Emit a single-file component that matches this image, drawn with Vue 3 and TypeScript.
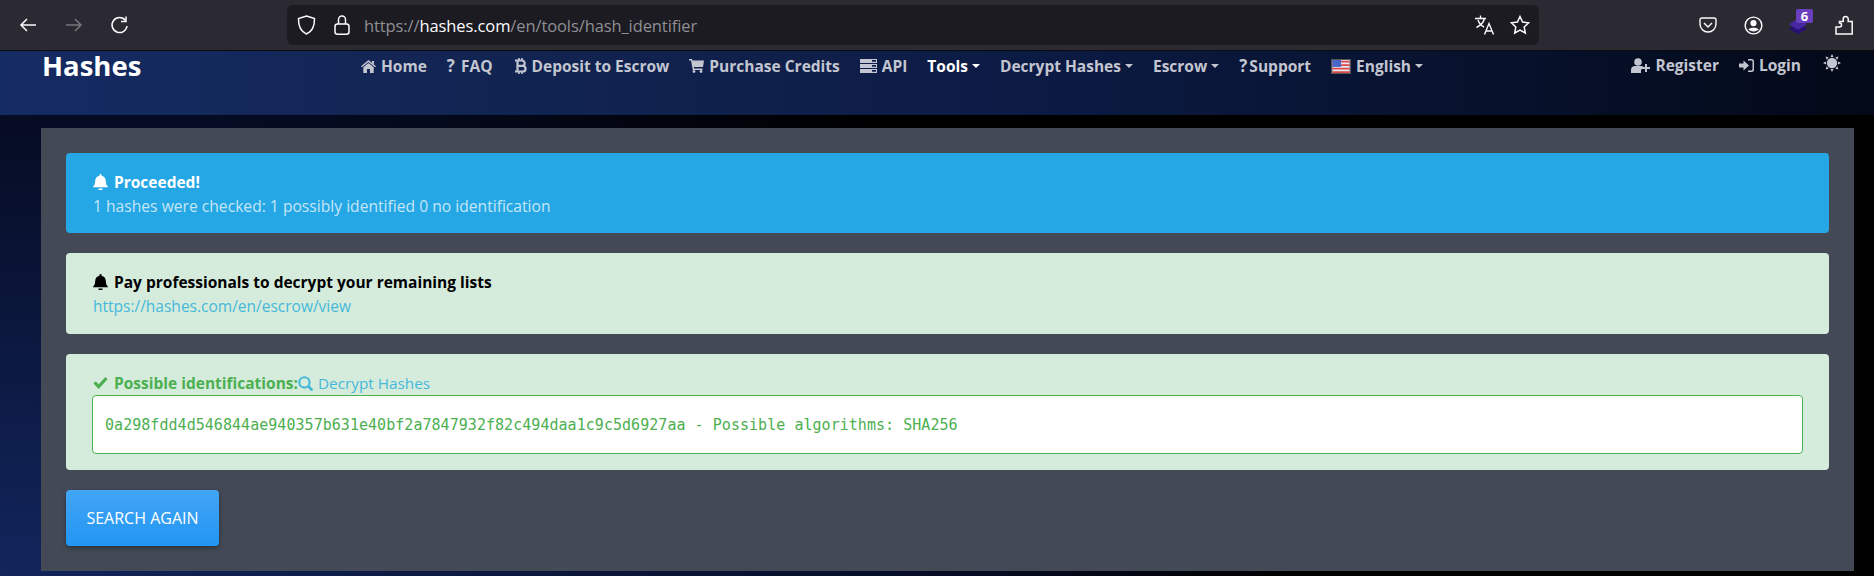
<script setup lang="ts">
const navLeft = [
  { label: 'Home', icon: 'home' },
  { label: 'FAQ', icon: 'q' },
  { label: 'Deposit to Escrow', icon: 'btc' },
  { label: 'Purchase Credits', icon: 'cart' },
  { label: 'API', icon: 'server' },
]
const navDrop = [
  { label: 'Tools', active: true },
  { label: 'Decrypt Hashes', active: false },
  { label: 'Escrow', active: false },
]
const hash = '0a298fdd4d546844ae940357b631e40bf2a7847932f82c494daa1c9c5d6927aa - Possible algorithms: SHA256'
</script>

<template>
  <div class="page">
    <div class="chrome">
      <div class="chrome-nav">
        <svg width="20" height="20" viewBox="0 0 20 20" fill="none" stroke="#fbfbfe" stroke-width="1.5"><path d="M18 10H3M9 4l-6 6 6 6" /></svg>
        <svg width="20" height="20" viewBox="0 0 20 20" fill="none" stroke="#76767c" stroke-width="1.5"><path d="M2 10h15M11 4l6 6-6 6" /></svg>
        <svg width="20" height="20" viewBox="0 0 20 20" fill="none" stroke="#fbfbfe" stroke-width="1.5"><path d="M15.5 5.5A7.5 7.5 0 1 0 17 11" /><path d="M16 1.5v5h-5" /></svg>
      </div>
      <div class="urlbar">
        <svg class="shield" width="19" height="20" viewBox="0 0 19 20" fill="none" stroke="#fbfbfe" stroke-width="1.5"><path d="M9.500 1l8 2.500c.2 7-1.500 12.500-8 15.500-6.500-3-8.200-8.500-8-15.500z" /></svg>
        <svg class="lock" width="16" height="20" viewBox="0 0 16 20" fill="none" stroke="#fbfbfe" stroke-width="1.5"><rect x="1" y="9" width="14" height="10.200" rx="2.500" /><path d="M4.500 9V4.500a3.500 3.500 0 0 1 7 0V9" /></svg>
        <div class="url"><span>https://</span><b>hashes.com</b><span>/en/tools/hash_identifier</span></div>
        <svg class="translate" width="20" height="20" viewBox="0 0 20 20" fill="none" stroke="#fbfbfe" stroke-width="1.400"><path d="M0 3.500h11M5.500 0.500v3M9.500 3.500c-1 4-4 7-8 9M3 5c1 3 3 5.500 6 7" /><path d="M9.500 19.500l4.500-11 4.500 11M11 16h6" /></svg>
        <svg class="star" width="20" height="20" viewBox="0 0 20 20" fill="none" stroke="#fbfbfe" stroke-width="1.500"><path d="M10 1.500l2.600 5.500 6 .8-4.400 4.200 1.100 6L10 15.100 4.700 18l1.100-6L1.400 7.800l6-.8z" /></svg>
      </div>
      <div class="chrome-tools">
        <svg width="18" height="17" viewBox="0 0 18 17" fill="none" stroke="#fbfbfe" stroke-width="1.400"><path d="M1 3a2 2 0 0 1 2-2h12a2 2 0 0 1 2 2v4a8 8 0 0 1-16 0z" /><path d="M5 6l4 4 4-4" /></svg>
        <svg width="19" height="19" viewBox="0 0 20 20" fill="none" stroke="#fbfbfe" stroke-width="1.500"><circle cx="10" cy="10" r="8.800" /><circle cx="10" cy="7.500" r="3.200" fill="#fbfbfe" stroke="none" /><path d="M4.500 14c2-2.200 9-2.200 11 0-2.500 3-8.500 3-11 0z" fill="#fbfbfe" stroke="none" /></svg>
        <div class="ext">
          <svg width="20" height="20" viewBox="0 0 22 20"><path d="M11 6l10 6-10 6-10-6z" fill="#271274" /><path d="M11 1l10 6-10 6-10-6z" fill="#4528a0" /></svg>
          <span class="ext-badge">6</span>
        </div>
        <svg width="18" height="20" viewBox="0 0 18 20" fill="none" stroke="#fbfbfe" stroke-width="1.500"><path d="M1 12h3.500a2 2 0 0 0 0-4V6.500h3.700V4a2.500 2.500 0 0 1 5 0v2.500h4V19H1z" /></svg>
      </div>
    </div>

    <header class="site-header">
      <div class="brand">Hashes</div>
      <nav class="nav">
        <a v-for="item in navLeft" :key="item.label" class="nav-link">
          <svg v-if="item.icon === 'home'" width="15" height="13" viewBox="0 0 15 13" fill="currentColor"><path d="M7.500 0l7.500 6.300-.9 1L7.500 1.900.9 7.300l-.9-1z" /><path d="M2.300 7.300l5.200-4.300 5.200 4.300V13H9V9H6v4H2.300z" /><path d="M11 1h2v3.500l-2-1.700z" /></svg>
          <span v-else-if="item.icon === 'q'" class="glyph q">?</span>
          <svg v-else-if="item.icon === 'btc'" class="btc" width="13" height="16" viewBox="0 0 13 16" fill="none" stroke="currentColor" stroke-width="2.200"><path d="M1 2.500h7a2.600 2.600 0 0 1 0 5.300H3.500h5.200a2.850 2.850 0 0 1 0 5.700H1M3.500 2.500v11" /><path d="M5 0v2.500M8 0v2.500M5 13.500V16M8 13.500V16" stroke-width="1.600" /></svg>
          <svg v-else-if="item.icon === 'cart'" width="15" height="14" viewBox="0 0 15 14" fill="currentColor"><path d="M0 0h3l.5 1.500H15l-1 6.500H4.800l.3 1.500h8.400V11H3.800L2 1.500H0z" /><circle cx="5" cy="12.500" r="1.400" /><circle cx="12" cy="12.500" r="1.400" /></svg>
          <svg v-else width="17" height="14" viewBox="0 0 17 14" fill="currentColor"><path d="M0 0h17v3.900H0zM0 5h17v3.900H0zM0 10h17v3.900H0z" /><path d="M12 1h4v1.700h-4zM12 6h4v1.700h-4zM12 11h4v1.700h-4z" fill="#0f1f50" /></svg>
          {{ item.label }}
        </a>
        <a v-for="item in navDrop" :key="item.label" class="nav-link" :class="{ active: item.active }">
          {{ item.label }}<i class="caret"></i>
        </a>
        <a class="nav-link support"><span class="glyph q">?</span>Support</a>
        <a class="nav-link">
          <svg width="20" height="15" viewBox="0 0 20 15" class="flag">
            <rect width="20" height="15" fill="#e8e8ee" />
            <path d="M0 1h20v2H0zM0 5h20v2H0zM0 9h20v2H0zM0 13h20v2H0z" fill="#d9484a" />
            <rect width="10" height="8" fill="#4867c8" />
          </svg>
          English<i class="caret"></i>
        </a>
      </nav>
      <div class="nav-right">
        <a class="nav-link">
          <svg width="19" height="15" viewBox="0 0 19 15" fill="currentColor"><circle cx="7" cy="4" r="3.800" /><path d="M0 15v-3c0-3 2-4 4-4h6c1.500 0 2.500.5 3 1.500h-2v2h-1V15z" /><path d="M14 6h2v3h3v2h-3v3h-2v-3h-3V9h3z" /></svg>
          Register
        </a>
        <a class="nav-link">
          <svg width="15" height="13" viewBox="0 0 15 13" fill="currentColor"><path d="M0 4.500h4.500V1.500L10 6.500l-5.500 5v-3H0z" /><path d="M9 0h3.500A2.500 2.500 0 0 1 15 2.500v8a2.500 2.500 0 0 1-2.500 2.500H9v-1.500h3.300c.7 0 1.200-.5 1.200-1.200V2.700c0-.7-.5-1.200-1.200-1.200H9z" /></svg>
          Login
        </a>
        <svg class="sun" width="18" height="18" viewBox="0 0 18 18" fill="currentColor"><circle cx="9" cy="9" r="5.200" /><path d="M9 0l1.500 3h-3zM9 18l-1.500-3h3zM0 9l3-1.500v3zM18 9l-3 1.500v-3zM2.600 2.600l3.200 1-2.200 2.200zM15.400 15.400l-3.200-1 2.200-2.200zM15.400 2.600l-1 3.200-2.200-2.200zM2.600 15.400l1-3.200 2.200 2.200z" /></svg>
      </div>
    </header>

    <main class="body-wrap">
      <section class="panel">
        <div class="alert alert-info">
          <div class="alert-title">
            <svg class="bell" width="15" height="16" viewBox="0 0 14 15" fill="currentColor"><path d="M7 0a1 1 0 0 1 1 1v.6c2.500.4 4 2.400 4 5 0 3 1 4.400 2 5.400v.5H0V12c1-1 2-2.400 2-5.400 0-2.600 1.500-4.600 4-5V1a1 1 0 0 1 1-1z" /><path d="M5 13.500h4a2 2 0 0 1-4 0z" /></svg>
            Proceeded!
          </div>
          <div class="alert-sub">1 hashes were checked: 1 possibly identified 0 no identification</div>
        </div>

        <div class="alert alert-success">
          <div class="alert-title dark">
            <svg class="bell" width="15" height="16" viewBox="0 0 14 15" fill="currentColor"><path d="M7 0a1 1 0 0 1 1 1v.6c2.500.4 4 2.400 4 5 0 3 1 4.400 2 5.400v.5H0V12c1-1 2-2.400 2-5.400 0-2.600 1.500-4.600 4-5V1a1 1 0 0 1 1-1z" /><path d="M5 13.500h4a2 2 0 0 1-4 0z" /></svg>
            Pay professionals to decrypt your remaining lists
          </div>
          <a class="link">https://hashes.com/en/escrow/view</a>
        </div>

        <div class="alert alert-result">
          <div class="result-head">
            <svg class="check" width="15" height="12" viewBox="0 0 14 12" fill="currentColor"><path d="M0 6.500l2.200-2.200 3 3L11.800 0 14 2.200 5.200 12z" /></svg>
            <b>Possible identifications:</b>
            <a class="link decrypt">
              <svg width="15" height="15" viewBox="0 0 14 14" fill="none" stroke="currentColor" stroke-width="2"><circle cx="6" cy="6" r="4.800" /><path d="M9.500 9.500L13.500 13.500" stroke-width="2.600" /></svg>
              Decrypt Hashes
            </a>
          </div>
          <div class="result-box">{{ hash }}</div>
        </div>

        <button class="search-btn">SEARCH AGAIN</button>
      </section>
    </main>
  </div>
</template>

<style scoped>
.page {
  width: 1874px;
  height: 576px;
  overflow: hidden;
  font-family: "Open Sans", "Noto Sans", sans-serif;
  background: #000;
}

.chrome {
  height: 50px;
  background: #2b2a33;
  border-bottom: 1px solid #0c0c0d;
  display: flex;
  align-items: center;
}

.chrome-nav {
  width: 287px;
  padding-left: 18px;
  box-sizing: border-box;
  display: flex;
  align-items: center;
  gap: 26px;
}

.urlbar {
  width: 1252px;
  height: 40px;
  background: #1c1b22;
  border-radius: 6px;
  display: flex;
  align-items: center;
  padding: 0 9px 0 10px;
  box-sizing: border-box;
}

.shield { margin-right: 18px; }
.lock { margin-right: 14px; }

.url {
  flex: 1;
  font-size: 16.500px;
  color: #8f8f94;
  letter-spacing: -0.1px;
}

.url b {
  color: #fbfbfe;
  font-weight: 400;
}

.translate { margin-right: 15px; }

.chrome-tools {
  flex: 1;
  display: flex;
  align-items: center;
  padding-left: 160px;
  gap: 27px;
}

.ext {
  position: relative;
  width: 20px;
  height: 24px;
  margin-left: -2px;
  display: flex;
  align-items: flex-end;
}

.ext-badge {
  position: absolute;
  top: -4px;
  left: 8px;
  width: 17px;
  height: 14px;
  background: #6a3fbf;
  color: #fff;
  font-size: 13px;
  font-weight: 700;
  text-align: center;
  line-height: 14px;
  border-radius: 2px;
}

.site-header {
  height: 64px;
  background: linear-gradient(90deg, #152b63 0%, #11234f 30%, #0c1b44 55%, #030918 100%);
  display: flex;
  align-items: flex-start;
}

.brand {
  width: 361px;
  padding-left: 42px;
  box-sizing: border-box;
  font-size: 27.500px;
  font-weight: 700;
  color: #fff;
  line-height: 30px;
}

.nav {
  display: flex;
  align-items: center;
  gap: 20px;
  height: 24px;
  margin-top: 3px;
  flex: 1;
}

.nav-link {
  color: #c3c6d1;
  font-size: 15.500px;
  font-weight: 700;
  line-height: 24px;
  display: inline-flex;
  align-items: center;
  gap: 5px;
  white-space: nowrap;
}

.nav-link.active { color: #fff; }
.support { gap: 0; }

.q {
  font-size: 17px;
  margin-right: 1px;
}

.support .q { margin-right: 2px; }
.btc { margin-left: 1px; }

.caret {
  display: inline-block;
  border-top: 4px solid currentColor;
  border-left: 4px solid transparent;
  border-right: 4px solid transparent;
  margin-left: -1px;
}

.flag { border: 1px solid #555; box-sizing: border-box; }

.nav-right {
  display: flex;
  align-items: center;
  gap: 20px;
  height: 24px;
  margin-top: 2px;
  padding-right: 33px;
  color: #c3c6d1;
}

.sun { margin-left: 2px; margin-top: -4px; }

.body-wrap {
  height: 461px;
  padding: 13px 20px 5px 41px;
  box-sizing: border-box;
  background: radial-gradient(1300px 620px at 0 100%, #12255c 0%, #050b22 75%, #000 100%);
}

.panel {
  height: 443px;
  background: #434a56;
  padding: 25px 25px 0;
  box-sizing: border-box;
}

.alert {
  border-radius: 4px;
  padding: 17px 26px 0 27px;
  box-sizing: border-box;
  margin-bottom: 20px;
  font-size: 15.500px;
  line-height: 24px;
}

.alert-info {
  height: 80px;
  background: #26a7e5;
  color: #c4e6f7;
}

.alert-success {
  height: 81px;
  background: #d5ecdc;
}

.alert-result {
  height: 116px;
  background: #d5ecdc;
  color: #4caf50;
}

.alert-title {
  font-weight: 700;
  color: #fff;
  display: flex;
  align-items: center;
  gap: 6px;
}

.alert-title.dark { color: #000; }
.alert-sub { font-size: 15.650px; }

.link { color: #46b8da; }

.result-head {
  display: flex;
  align-items: center;
  line-height: 24px;
  height: 24px;
}

.check { margin-right: 6px; }

.result-head b { font-weight: 700; }

.decrypt {
  display: inline-flex;
  align-items: center;
  gap: 5px;
  font-size: 15.300px;
}

.result-box {
  height: 59px;
  margin-left: -1px;
  background: #fff;
  border: 1px solid #4caf50;
  border-radius: 4px;
  box-sizing: border-box;
  padding-left: 12px;
  display: flex;
  align-items: center;
  font-family: "DejaVu Sans Mono", "Liberation Mono", monospace;
  font-size: 15px;
  letter-spacing: 0.04px;
  color: #4caf50;
}

.search-btn {
  display: block;
  width: 153px;
  height: 56px;
  border: none;
  border-radius: 4px;
  background: linear-gradient(180deg, #42a5f5, #2196f3);
  color: #fff;
  font-family: "Open Sans", sans-serif;
  font-size: 16px;
  box-shadow: 0 2px 5px rgba(0, 0, 0, 0.35);
}
</style>

<style>
html, body {
  margin: 0;
  background: #000;
}
</style>
